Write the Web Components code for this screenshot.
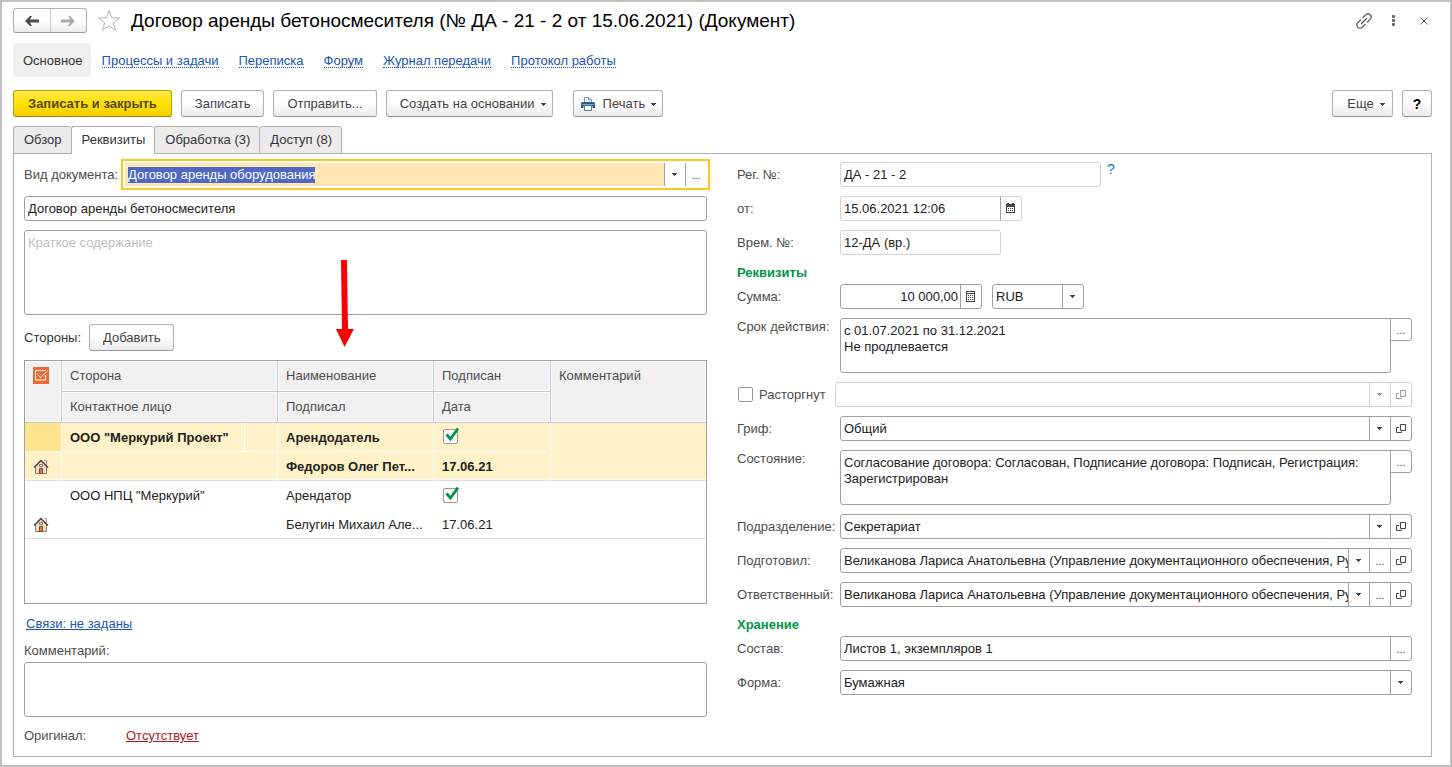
<!DOCTYPE html>
<html lang="ru">
<head>
<meta charset="utf-8">
<meta name="viewport" content="width=device-width, initial-scale=1">
<title>Договор аренды бетоносмесителя</title>
<style>
  body { margin: 0; background: #fff; color: #333; font: 13px/16px "Liberation Sans", Arial, sans-serif; }
</style>
</head>
<body>
<doc-window>
  <window-header slot="header" caption="Договор аренды бетоносмесителя (№ ДА - 21 - 2 от 15.06.2021) (Документ)"></window-header>
  <section-nav slot="nav">
    <nav-link current>Основное</nav-link>
    <nav-link>Процессы и задачи</nav-link>
    <nav-link>Переписка</nav-link>
    <nav-link>Форум</nav-link>
    <nav-link>Журнал передачи</nav-link>
    <nav-link>Протокол работы</nav-link>
  </section-nav>
  <command-bar slot="commands">
    <cmd-button primary>Записать и закрыть</cmd-button>
    <cmd-button>Записать</cmd-button>
    <cmd-button>Отправить...</cmd-button>
    <cmd-button menu>Создать на основании</cmd-button>
    <cmd-button slot="group" icon="printer" menu>Печать</cmd-button>
    <cmd-button slot="end" menu>Еще</cmd-button>
    <cmd-button slot="end" help>?</cmd-button>
  </command-bar>
  <tab-strip slot="tabs" tabs="Обзор|Реквизиты|Обработка (3)|Доступ (8)" active="1"></tab-strip>
  <document-form></document-form>
</doc-window>

<script>
const ICONS = {
  drop: '<svg width="6" height="3" viewBox="0 0 6 3"><path d="M0 0h5v1H4v1H3v1H2V2H1V1H0z" fill="currentColor"/></svg>',
  open: '<svg width="10" height="11" viewBox="0 0 10 11" fill="none" stroke="currentColor"><path d="M4.500 1.500h5v6h-5zM3 4.500H.5v5h5V8.500"/></svg>',
  calendar: '<svg width="10" height="11" viewBox="0 0 10 11" fill="currentColor"><path d="M1 0h2v1h3V0h2v1h1v9H0V1h1zM1 4v5h7V4z" fill-rule="evenodd"/><path d="M2 5h1v1H2zM4 5h1v1H4zM6 5h1v1H6zM2 7h1v1H2zM4 7h1v1H4zM6 7h1v1H6z"/></svg>',
  calculator: '<svg width="10" height="11" viewBox="0 0 10 11" fill="currentColor"><path d="M0 0h9v11H0zM1 1v1h7V1zM1 3v7h7V3z" fill-rule="evenodd"/><path d="M2 4h1v1H2zM4 4h1v1H4zM6 4h1v1H6zM2 6h1v1H2zM4 6h1v1H4zM6 6h1v1H6zM2 8h1v1H2zM4 8h1v1H4zM6 8h1v1H6z"/></svg>',
  printer: '<svg width="14" height="14" viewBox="0 0 14 14"><path d="M3.500 5V.5H8L10.500 3v2" fill="#fff" stroke="#7f93a8"/><path d="M7.500.5V3h3" fill="none" stroke="#7f93a8"/><path d="M1 5h12l1 1v5h-2.500V9h-9v2H0V6z" fill="#2d5f8e"/><path d="M1 7.500h12" stroke="#7fa3c4"/><path d="M3.500 8.500h7v5h-7z" fill="#fff" stroke="#50759a"/></svg>',
  house: '<svg width="16" height="16" viewBox="0 0 16 16"><path d="M11.500 1.500h2v5" fill="#eee" stroke="#b39d92"/><path d="M2.500 7.500l5.500-6 5.500 6v7h-11z" fill="#eadfd6" stroke="#8d776c"/><path d="M1 8.500l7-7 7 7" fill="none" stroke="#57413a" stroke-width="1.500"/><path d="M6.500 5.500h3v2h-3z" fill="#fff" stroke="#9a6a50"/><path d="M6.500 9.500h3v5h-3z" fill="#d87f3c" stroke="#8a4a22"/></svg>',
  marks: '<svg width="16" height="17" viewBox="0 0 16 17"><path d="M0 0h16v17H0z" fill="#ef6a35"/><path d="M12.500 8v5h-10V3.500h10" fill="none" stroke="#fff"/><path d="M4.500 7.500l3 3 7-6.500" fill="none" stroke="#fff"/></svg>',
  back: '<svg width="14" height="12" viewBox="0 0 14 12"><path d="M0 6l5-5h2L5 4.500h9v3H5L7 11H5z" fill="currentColor"/></svg>',
  forward: '<svg width="14" height="12" viewBox="0 0 14 12"><path d="M14 6L9 1H7l2 3.500H0v3h9L7 11h2z" fill="currentColor"/></svg>',
  star: '<svg width="24" height="23" viewBox="0 0 24 23"><path d="M12 1.500l2.700 7.200 7.800.3-6.200 4.800 2.200 7.500-6.500-4.400-6.500 4.400 2.200-7.500L1.500 9l7.800-.3z" fill="#fff" stroke="#a9b0b8"/></svg>',
  link: '<svg width="16" height="16" viewBox="0 0 16 16" fill="none" stroke="#555" stroke-width="1.200" stroke-linecap="round"><path d="M5.500 10.500l5-5M7 4.500l2.800-2.800a3.100 3.100 0 0 1 4.400 4.400L11.500 9M9 11.500l-2.800 2.800a3.100 3.100 0 0 1-4.400-4.400L4.500 7"/></svg>',
  more: '<svg width="4" height="12" viewBox="0 0 4 12" fill="#666"><rect width="3" height="3" rx="1"/><rect y="4" width="3" height="3" rx="1"/><rect y="8" width="3" height="3" rx="1"/></svg>',
  close: '<svg width="8" height="8" viewBox="0 0 8 8"><path d="M.5.5l7 7M7.500.5l-7 7" stroke="#555"/></svg>'
};

const BASE = `
  * { box-sizing: border-box; }
  svg { display: block; flex: none; }
  button, input, select, textarea { font: inherit; color: inherit; margin: 0; }
  button { padding: 0; cursor: pointer; }
`;

class Part extends HTMLElement {
  connectedCallback() {
    if (this.shadowRoot) return;
    this.attachShadow({ mode: 'open' }).innerHTML = `<style>${BASE}${this.css()}</style>${this.html()}`;
    this.ready();
  }
  attr(name) { return this.getAttribute(name) || ''; }
  css() { return ''; }
  html() { return '<slot></slot>'; }
  ready() {}
}

customElements.define('doc-window', class extends Part {
  css() { return `
    :host { display: flex; flex-direction: column; box-sizing: border-box; min-height: 100vh;
      border: 2px solid #c0c0c0; padding: 6px 18px 8px 11px; }
    ::slotted([slot=nav]) { margin-top: 10px; }
    ::slotted([slot=commands]) { margin-top: 13px; }
    ::slotted([slot=tabs]) { margin-top: 9px; }
    main { flex: 1; border: 1px solid #b0b0b0; padding: 8px 19px 10px 10px; }
  `; }
  html() { return `<slot name="header"></slot><slot name="nav"></slot><slot name="commands"></slot>
    <slot name="tabs"></slot><main><slot></slot></main>`; }
});

customElements.define('window-header', class extends Part {
  css() { return `
    :host { display: flex; align-items: center; height: 25px; }
    .history { display: flex; height: 25px; width: 74px; border: 1px solid #b0b0b0; border-bottom-color: #999;
      border-radius: 3px; background: linear-gradient(#fff 50%, #ececec); }
    .history button { flex: 1; display: grid; place-items: center; border: 0; background: none; color: #4d4d4d; }
    .history button + button { border-left: 1px solid #ccc; color: #aaa; }
    .plain { display: grid; place-items: center; border: 0; background: none; width: 30px; height: 24px; }
    .star { width: 24px; margin: 0 10px; }
    h1 { flex: 1; margin: 0; font-size: 19px; line-height: 24px; font-weight: 400; color: #000; white-space: nowrap; }
    .tools { display: flex; margin-right: -7px; }
  `; }
  html() { return `
    <div class="history"><button aria-label="Назад">${ICONS.back}</button><button aria-label="Вперед">${ICONS.forward}</button></div>
    <button class="plain star" aria-label="В избранное">${ICONS.star}</button>
    <h1>${this.attr('caption')}</h1>
    <div class="tools">
      <button class="plain" aria-label="Получить ссылку">${ICONS.link}</button>
      <button class="plain" aria-label="Меню">${ICONS.more}</button>
      <button class="plain" aria-label="Закрыть">${ICONS.close}</button>
    </div>`; }
});

customElements.define('section-nav', class extends Part {
  css() { return `:host { display: block; } nav { display: flex; gap: 20px; height: 34px; }
    ::slotted([current]) { margin-right: -9px; }`; }
  html() { return '<nav><slot></slot></nav>'; }
});

customElements.define('nav-link', class extends Part {
  css() { return `
    :host { display: flex; align-items: center; white-space: nowrap; }
    :host([current]) { background: #f0f0f0; border-radius: 4px; padding: 0 8px 0 10px; }
    a { display: block; color: #1a56b8; line-height: 13px; padding-top: 2px; text-decoration: none; border-bottom: 1px dotted #1a56b8; }
    :host([current]) a { color: #333; border-color: transparent; }
  `; }
  html() { return `<a href="#"${this.hasAttribute('current') ? ' aria-current="page"' : ''}><slot></slot></a>`; }
});

customElements.define('command-bar', class extends Part {
  css() { return `:host { display: flex; gap: 9px; } .group { margin-left: 11px; } .end { display: flex; gap: 9px; margin-left: auto; }`; }
  html() { return `<slot></slot><div class="group"><slot name="group"></slot></div><div class="end"><slot name="end"></slot></div>`; }
});

customElements.define('cmd-button', class extends Part {
  css() { return `
    :host { display: block; }
    button { display: flex; align-items: center; justify-content: center; height: 27px; min-width: 61px; padding: 1px 13px 0;
      border: 1px solid #b3b3b3; border-bottom-color: #999; border-radius: 3px; color: #444; white-space: nowrap;
      background: linear-gradient(#fff 45%, #ebebeb); }
    :host([menu]) button { padding-right: 5px; gap: 6px; }
    :host([icon]) button { padding-left: 7px; }
    :host([icon]) slot { display: block; margin-left: 2px; }
    :host([primary]) button { padding: 1px 14px 0; font-weight: 700; color: #554a1c; border-color: #b8a000; border-bottom-color: #97830a;
      background: linear-gradient(#ffe94a, #ffe000 50%, #f3cf00); }
    :host([help]) button { font-size: 14px; font-weight: 700; color: #000; padding: 0; min-width: 30px; }
  `; }
  html() { return `<button type="button">${ICONS[this.attr('icon')] || ''}<slot></slot>${this.hasAttribute('menu') ? ICONS.drop : ''}</button>`; }
});

customElements.define('tab-strip', class extends Part {
  css() { return `
    :host { display: flex; height: 28px; margin-bottom: -1px; z-index: 1; }
    button { padding: 0 9px 0 10px; border: 1px solid #b0b0b0; border-right-width: 0; background: #ebebeb; color: #333;
      border-radius: 3px 3px 0 0; white-space: nowrap; }
    button:last-child { border-right-width: 1px; }
    button[aria-selected=true] { background: #fff; border-bottom-color: #fff; }
  `; }
  html() { return this.attr('tabs').split('|').map((t, i) =>
    `<button type="button" role="tab" aria-selected="${i === +this.attr('active')}">${t}</button>`).join(''); }
  ready() { this.setAttribute('role', 'tablist'); }
});

/* One labelled control.
   kind: input (default), select or memo; parts: the buttons at the control's right end. */
customElements.define('form-field', class extends Part {
  css() { return `
    :host { display: flex; min-width: 0; }
    label { flex: none; width: var(--label, 103px); line-height: 25px; color: #4d4d4d; white-space: nowrap; }
    :host([kind=memo]) label { line-height: 18px; }
    .box { --line: #a0a0a0; flex: 1; min-width: 0; display: grid; grid-auto-columns: 21px; grid-template-columns: minmax(0, 1fr);
      height: 25px; border: 1px solid var(--line); border-radius: 3px; background: #fff; }
    :host([width]) .box { flex: none; width: var(--w); }
    .light { --line: #d2d2d2; }
    input, select, textarea { grid-row: 1; grid-column: 1; width: 100%; min-width: 0; border: 0; border-radius: 0; outline: 0;
      background: none; padding: 0 3px; appearance: none; color: #222; text-overflow: clip; line-height: 16px; }
    select { grid-column: 1 / 3; padding-right: 21px; }
    :host([right]) input { text-align: right; padding-right: 2px; }
    .cell { grid-row: 1; display: grid; place-items: center; border: 0; border-left: 1px solid var(--line); background: none; color: #444; }
    .light .cell { color: #999; }
    .light .cell.strong { color: #444; border-left-color: #a0a0a0; }
    .cell.face { pointer-events: none; grid-column: 2; }
    .dots { font-size: 11px; line-height: 12px; }
    .memo { flex: 1; display: flex; align-items: flex-start; min-width: 0; }
    textarea { display: block; flex: 1; height: var(--h, 55px); border: 1px solid #a0a0a0; border-radius: 3px; padding: 4px 3px; resize: none; overflow: hidden; }
    textarea:not(:last-child) { border-top-right-radius: 0; }
    .memo .dots { flex: none; width: 22px; height: 23px; margin-left: -1px; border: 1px solid #a0a0a0; border-radius: 0 3px 3px 0; }
    ::placeholder { color: #c0c0c0; opacity: 1; }
    :host([active]) .box { outline: 2px solid #fcc824; outline-offset: 1px; border-color: #fff; border-radius: 0; }
    :host([active]) .box .cell { border-left-color: #a0a0a0; }
    :host([active]) input { background: #ffe6b3; }
    ::selection { background: #4f68c4; color: #fff; }
  `; }
  html() {
    const kind = this.attr('kind') || 'input', label = this.attr('label'), value = this.attr('value');
    const parts = this.attr('parts').split(' ').filter(Boolean);
    const names = { drop: 'Выбрать из списка', dots: 'Выбрать', open: 'Открыть', calendar: 'Календарь', calculator: 'Калькулятор' };
    const aria = label ? '' : ` aria-label="${this.attr('name')}"`;
    const off = this.hasAttribute('off') ? ' disabled' : '';
    const cell = p => kind === 'select' && p === 'drop'
      ? `<span class="cell face">${ICONS.drop}</span>`
      : `<button type="button" class="cell ${p}${p === 'calendar' ? ' strong' : ''}" aria-label="${names[p]}"${off}>${p === 'dots' ? '...' : ICONS[p]}</button>`;
    const cells = parts.map(cell).join('');
    const head = label ? `<label for="c">${label}</label>` : '';
    if (kind === 'memo') return `${head}<div class="memo"><textarea id="c"${aria} placeholder="${this.attr('hint')}">${value.replace(/\|/g, '\n')}</textarea>${cells}</div>`;
    const control = kind === 'select'
      ? `<select id="c"${aria}${off}><option>${value}</option></select>`
      : `<input id="c" type="text" value="${value}"${aria}>`;
    return `${head}<div class="box${this.hasAttribute('light') ? ' light' : ''}">${control}${cells}</div>`;
  }
  ready() {
    if (this.hasAttribute('width')) this.style.setProperty('--w', this.attr('width') + 'px');
    if (this.hasAttribute('active')) {
      const input = this.shadowRoot.querySelector('input');
      input.focus();
      input.setSelectionRange(0, input.value.length, 'backward');
    }
  }
});

customElements.define('check-field', class extends Part {
  css() { return `
    :host { display: flex; align-items: center; gap: 6px; width: 98px; height: 25px; padding-left: 1px; box-sizing: border-box; color: #4d4d4d; }
    input { flex: none; appearance: none; width: 15px; height: 15px; border: 1px solid #999; border-radius: 2px; background: #fff; }
  `; }
  html() { return `<input type="checkbox" id="c"><label for="c"><slot></slot></label>`; }
});

customElements.define('group-title', class extends Part {
  css() { return `:host { display: block; } h2 { margin: 0; font-size: 13px; line-height: 18px; color: #009646; }`; }
  html() { return '<h2><slot></slot></h2>'; }
});

customElements.define('parties-table', class extends Part {
  css() { return `
    :host { display: block; box-sizing: border-box; height: 244px; border: 1px solid #a0a0a0; }
    table { width: 100%; table-layout: fixed; border-collapse: separate; border-spacing: 0; }
    th, td { padding: 0 8px; text-align: left; font-weight: 400; white-space: nowrap; overflow: hidden; }
    th { height: 31px; color: #4d4d4d; background: #f1f1f1; border-right: 1px solid #c8c8c8; border-bottom: 1px solid #c8c8c8; box-shadow: inset 0 0 0 1px #fff; }
    th[rowspan] { vertical-align: top; padding-top: 7px; }
    th:first-child[rowspan] { padding-top: 6px; }
    th.last { border-right: 0; }
    td { height: 29px; padding-top: 1px; color: #222; }
    tr.end td, td.end { border-bottom: 1px solid #e0e0e0; }
    .current td { background: #fff2c8; font-weight: 700; border-right: 1px solid #fff; border-bottom: 1px solid #fff; background-clip: padding-box; }
    .current.end td, .current td.end { border-bottom-color: #e0e0e0; box-shadow: inset 0 -1px 0 #fff; }
    .current td:last-child.end, .current td.tall { border-right: 0; }
    .current td.cursor { background: #ffe28c; }
    input { display: block; appearance: none; width: 16px; height: 17px; border: 0;
      background: url("data:image/svg+xml,%3Csvg xmlns='http://www.w3.org/2000/svg' width='16' height='17'%3E%3Crect x='.5' y='1.500' width='14' height='14' rx='1.500' fill='%23fff' stroke='%23999'/%3E%3Cpath d='M3.500 6.500l4 4.500L15 .5' fill='none' stroke='%23009646' stroke-width='2.800'/%3E%3C/svg%3E"); }
    td.check { padding: 0 0 1px 9px; }
  `; }
  html() {
    const rows = [
      ['ООО "Меркурий Проект"', 'Арендодатель', 'Федоров Олег Пет...', '17.06.21'],
      ['ООО НПЦ "Меркурий"', 'Арендатор', 'Белугин Михаил Але...', '17.06.21']
    ];
    const body = rows.map(([side, role, person, date], i) => {
      const c = i ? '' : 'current';
      return `<tr class="${c}"><td class="cursor"></td>${i ? `<td colspan="2">${side}</td>` : `<td>${side}</td><td></td>`}
        <td>${role}</td><td class="check"><input type="checkbox" checked aria-label="Подписан"></td><td class="tall end" rowspan="2"></td></tr>
        <tr class="${c} end"><td>${ICONS.house}</td><td colspan="2"></td><td>${person}</td><td>${date}</td></tr>`;
    }).join('');
    return `<table>
      <colgroup><col style="width:37px"><col style="width:183px"><col style="width:33px"><col style="width:156px"><col style="width:117px"><col></colgroup>
      <thead>
        <tr><th rowspan="2">${ICONS.marks}</th><th colspan="2">Сторона</th><th>Наименование</th><th>Подписан</th><th class="last" rowspan="2">Комментарий</th></tr>
        <tr><th colspan="2">Контактное лицо</th><th>Подписал</th><th>Дата</th></tr>
      </thead>
      <tbody>${body}</tbody></table>`;
  }
});

customElements.define('pointer-arrow', class extends Part {
  css() { return ':host { display: block; pointer-events: none; }'; }
  html() { return '<svg width="19" height="88" viewBox="0 0 19 88"><path d="M6 1h6l1 69h6L9.500 88 1 70h6z" fill="#f00"/></svg>'; }
});

customElements.define('document-form', class extends Part {
  css() { return `
    :host { display: grid; grid-template-columns: minmax(0, 683fr) minmax(0, 675fr); gap: 30px; }
    .col { display: flex; flex-direction: column; gap: 9px; position: relative; }
    .row { display: flex; align-items: center; }
    group-title { margin-bottom: -7px; }
    .sides { gap: 8px; color: #333; }
    .links { margin: 2px 0 2px 2px; line-height: 18px; }
    .comment { display: grid; gap: 3px; color: #4d4d4d; margin-top: -1px; }
    .original { color: #4d4d4d; margin-top: 2px; }
    .original span { width: 102px; }
    a { color: #1a56b8; text-underline-offset: 1px; }
    a.missing { color: #b01c1c; }
    a.help { align-self: flex-start; margin-left: 6px; font-size: 14px; line-height: 14px; color: #0a7ac2; text-decoration: none; }
    .sum { gap: 10px; }
    .wide { flex: 1; }
    pointer-arrow { position: absolute; left: 311px; top: 97px; }
  `; }
  html() { return `
    <div class="col">
      <form-field label="Вид документа:" style="--label:100px" value="Договор аренды оборудования" parts="drop dots" active></form-field>
      <form-field name="Наименование" value="Договор аренды бетоносмесителя"></form-field>
      <form-field kind="memo" name="Краткое содержание" hint="Краткое содержание" style="--h:85px"></form-field>
      <div class="row sides"><span>Стороны:</span><cmd-button>Добавить</cmd-button></div>
      <parties-table></parties-table>
      <div class="links"><a href="#">Связи: не заданы</a></div>
      <div class="comment"><span>Комментарий:</span><form-field kind="memo" name="Комментарий"></form-field></div>
      <div class="row original"><span>Оригинал:</span><a class="missing" href="#">Отсутствует</a></div>
      <pointer-arrow></pointer-arrow>
    </div>
    <div class="col">
      <div class="row"><form-field label="Рег. №:" value="ДА - 21 - 2" width="261" light></form-field><a class="help" href="#">?</a></div>
      <form-field label="от:" value="15.06.2021 12:06" parts="calendar" width="182" light></form-field>
      <form-field label="Врем. №:" value="12-ДА (вр.)" width="161" light></form-field>
      <group-title>Реквизиты</group-title>
      <div class="row sum">
        <form-field label="Сумма:" value="10 000,00" parts="calculator" width="142" right></form-field>
        <form-field kind="select" name="Валюта" value="RUB" parts="drop" width="92"></form-field>
      </div>
      <form-field kind="memo" label="Срок действия:" value="с 01.07.2021 по 31.12.2021|Не продлевается" parts="dots"></form-field>
      <div class="row"><check-field>Расторгнут</check-field><form-field class="wide" kind="select" name="Причина расторжения" parts="drop open" light off></form-field></div>
      <form-field kind="select" label="Гриф:" value="Общий" parts="drop open"></form-field>
      <form-field kind="memo" label="Состояние:" value="Согласование договора: Согласован, Подписание договора: Подписан, Регистрация: Зарегистрирован" parts="dots"></form-field>
      <form-field kind="select" label="Подразделение:" value="Секретариат" parts="drop open"></form-field>
      <form-field kind="select" label="Подготовил:" value="Великанова Лариса Анатольевна (Управление документационного обеспечения, Руководитель)" parts="drop dots open"></form-field>
      <form-field kind="select" label="Ответственный:" value="Великанова Лариса Анатольевна (Управление документационного обеспечения, Руководитель)" parts="drop dots open"></form-field>
      <group-title>Хранение</group-title>
      <form-field label="Состав:" value="Листов 1, экземпляров 1" parts="dots"></form-field>
      <form-field kind="select" label="Форма:" value="Бумажная" parts="drop"></form-field>
    </div>`; }
});
</script>
</body>
</html>
